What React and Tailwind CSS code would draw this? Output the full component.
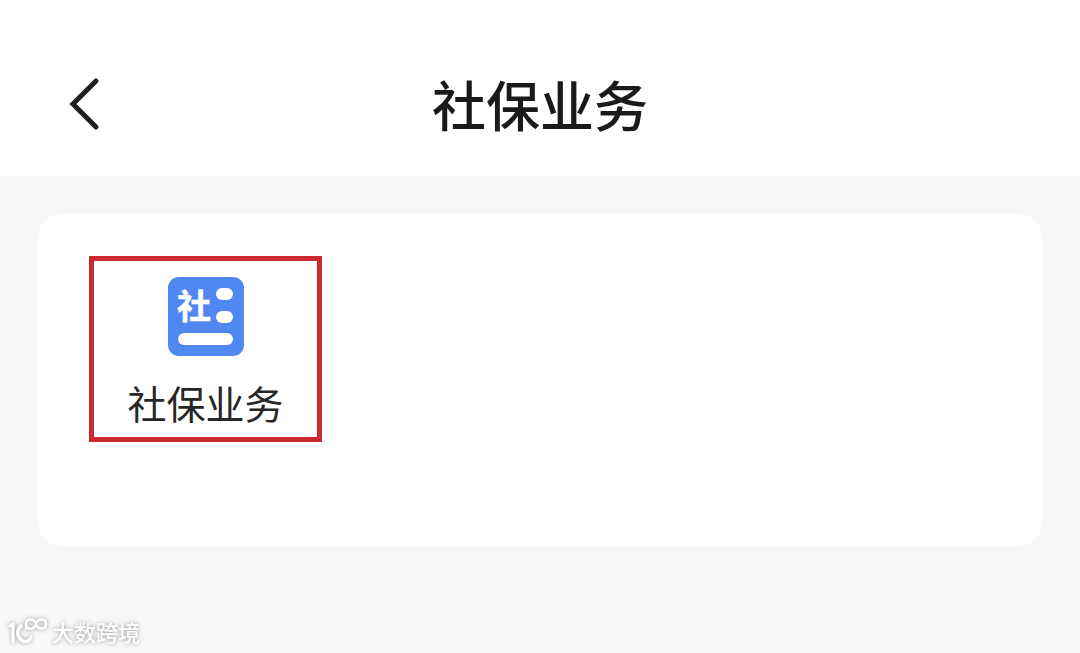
function BackIcon() {
  return (
    <svg width="32" height="54" viewBox="0 0 32 54" fill="none" aria-hidden="true">
      <path d="M28 4 L5 27 L28 50" stroke="#1f1f1f" strokeWidth="5" strokeLinecap="round" strokeLinejoin="miter" />
    </svg>
  );
}

function ServiceIcon() {
  return (
    <svg width="76" height="79" viewBox="0 0 76 79" aria-hidden="true">
      <rect width="76" height="79" rx="11" fill="#5087f1" />
      <text x="9" y="42" fill="#fff" stroke="#fff" strokeWidth="0.5" fontSize="34" fontWeight="700">社</text>
      <rect x="48" y="11" width="17" height="12" rx="6" fill="#fff" />
      <rect x="48" y="34" width="17" height="12" rx="6" fill="#fff" />
      <rect x="10" y="56" width="55" height="12" rx="6" fill="#fff" />
    </svg>
  );
}

function WatermarkLogo() {
  return (
    <svg width="40" height="28" viewBox="0 0 40 28" fill="none" stroke="#fff" strokeLinecap="round" strokeLinejoin="round" aria-hidden="true">
      <path d="M2 9 L5 7 V25" strokeWidth="3" />
      <path d="M13 9 C9 12 9 17 11 20 C14 26 21 26 23 20" strokeWidth="3.5" />
      <path d="M18 12 V7 C18 1 26 1 28 7 C30 13 38 13 38 7 C38 1 30 1 28 7 C26 13 20 13 18 9" strokeWidth="2.5" />
    </svg>
  );
}

export default function App() {
  return (
    <div className="relative flex min-h-screen flex-col bg-[#f6f8fa] font-['Noto_Sans_CJK_SC',sans-serif]">
      <header className="grid h-44 grid-cols-[1fr_auto_1fr] items-center bg-white px-[68px] pt-8">
        <button type="button" aria-label="返回" className="justify-self-start">
          <BackIcon />
        </button>
        <h1 className="text-[54px] leading-[80px] font-medium text-[#1a1a1a]">社保业务</h1>
      </header>

      <main className="flex-1 px-[38px] pt-[38px] pb-16">
        <section className="min-h-[332px] rounded-[24px] bg-white px-[51px] py-[42px]">
          <button
            type="button"
            className="flex h-[186px] w-[233px] flex-col items-center gap-[18px] border-5 border-[#cb2a30] pt-4"
          >
            <ServiceIcon />
            <span className="text-[39px] leading-[56px] text-[#262626]">社保业务</span>
          </button>
        </section>
      </main>

      <footer className="absolute bottom-1.5 left-2 flex items-center gap-1 text-white drop-shadow-[0_0_2px_#999999]">
        <WatermarkLogo />
        <span className="text-[22px] leading-8 font-medium">大数跨境</span>
      </footer>
    </div>
  );
}
